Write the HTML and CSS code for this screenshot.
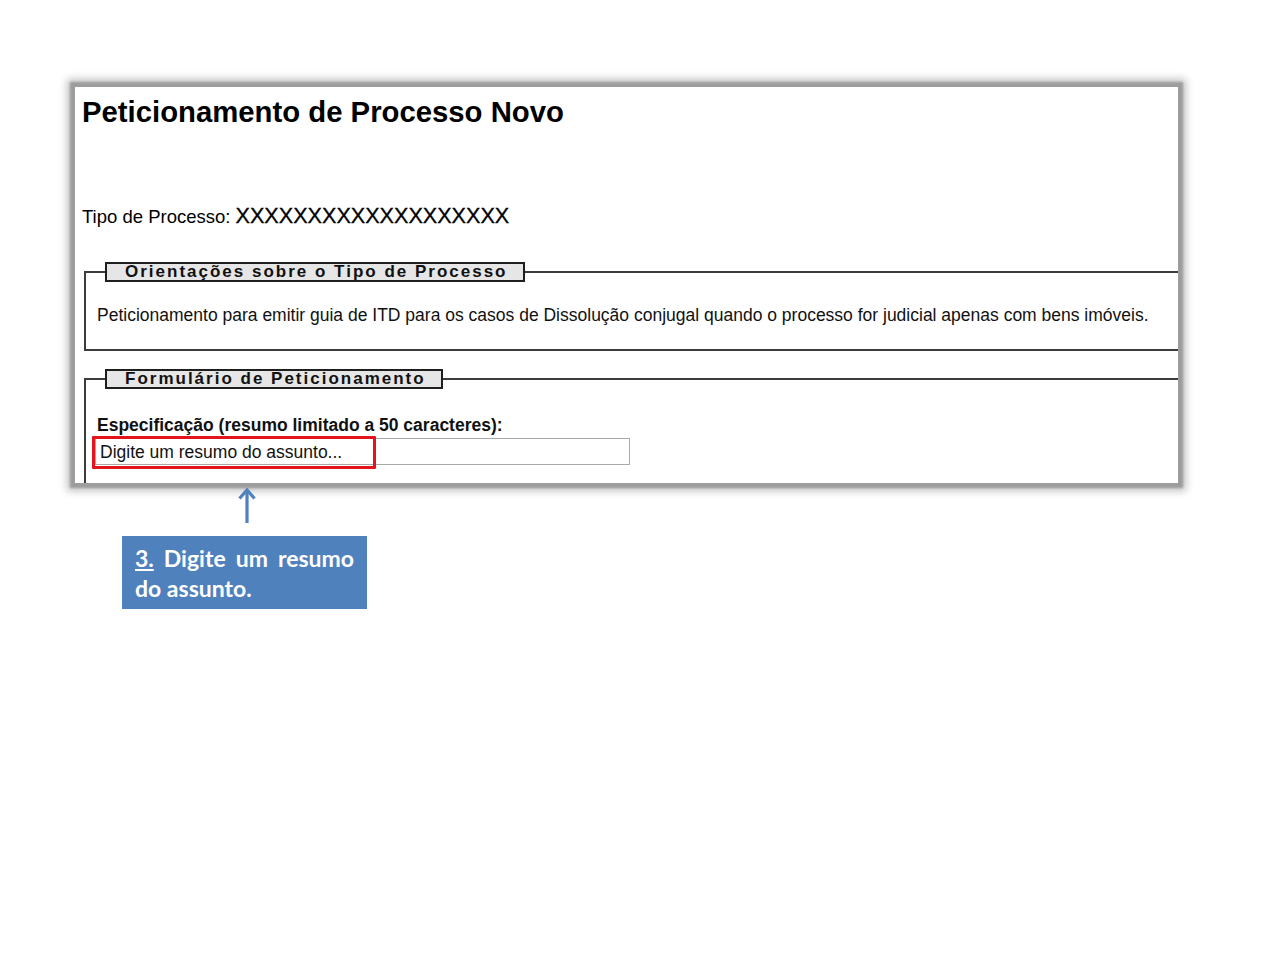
FILE: index.html
```html
<!DOCTYPE html>
<html lang="pt-BR">
<head>
<meta charset="utf-8">
<title>Peticionamento de Processo Novo</title>
<link rel="stylesheet" href="styles.css">
</head>
<body>
<div class="shot">
  <h1 class="title">Peticionamento de Processo Novo</h1>
  <div class="tipo">Tipo de Processo: <span class="tipo-val">XXXXXXXXXXXXXXXXXXX</span></div>
  <fieldset class="box box-first">
    <legend class="legend">Orientações sobre o Tipo de Processo</legend>
    <p class="desc">Peticionamento para emitir guia de ITD para os casos de Dissolução conjugal quando o processo for judicial apenas com bens imóveis.</p>
  </fieldset>
  <fieldset class="box box-second">
    <legend class="legend">Formulário de Peticionamento</legend>
    <label class="label" for="esp">Especificação (resumo limitado a 50 caracteres):</label>
    <div class="field">
      <input id="esp" class="input" type="text" placeholder="Digite um resumo do assunto...">
      <div class="highlight"></div>
    </div>
  </fieldset>
</div>
<div class="callout">
  <svg class="arrow" width="20" height="36" viewBox="0 0 20 36">
    <line x1="10" y1="4" x2="10" y2="36" stroke="#4f81bd" stroke-width="3.2"/>
    <polyline points="2.5,11.5 10,3 17.5,11.5" fill="none" stroke="#4f81bd" stroke-width="3.2" stroke-linejoin="miter"/>
  </svg>
  <div class="note">
    <span class="note-line note-first"><u class="num">3.</u> <span>Digite um resumo</span></span>
    <span class="note-line">do assunto.</span>
  </div>
</div>
</body>
</html>
```
FILE: styles.css
```css
html, body {
  margin: 0;
  padding: 0;
  background: #ffffff;
}

body {
  font-family: "Liberation Sans", Arial, sans-serif;
  color: #111;
}

.shot {
  margin: 87px 0 0 75px;
  width: 1103px;
  height: 396px;
  overflow: hidden;
  background: #fff;
  box-shadow: 0 0 2px 5px #9d9d9d, 0 0 8px 8px #c2c2c2;
  padding-left: 7px;
  box-sizing: border-box;
}

.title {
  margin: 8px 0 0 0;
  font-size: 29.3px;
  line-height: 34px;
  font-weight: bold;
  color: #000;
}

.tipo {
  margin-top: 74px;
  font-size: 18.5px;
  line-height: 26px;
  color: #000;
}

.tipo-val {
  font-size: 21.6px;
  line-height: 26px;
  -webkit-text-stroke: 0.3px #000;
}

.box {
  margin: 0 0 0 2px;
  width: 1140px;
  border: 2px solid #3c3c3c;
  border-right: none;
  padding: 0 0 0 11px;
  box-sizing: border-box;
  min-width: 0;
}

.box-first {
  margin-top: 32px;
  padding-bottom: 24px;
}

.box-second {
  margin-top: 18px;
  height: 200px;
}

.legend {
  margin-left: 8px;
  padding: 0 15px 0 18px;
  border: 2px solid #1e1e1e;
  background: #e6e6e6;
  font-size: 17px;
  line-height: 16px;
  font-weight: bold;
  letter-spacing: 2px;
  color: #111;
}

.desc {
  margin: 23px 0 0 0;
  font-size: 17.5px;
  line-height: 20px;
}

.label {
  display: block;
  margin-top: 26px;
  font-size: 17.5px;
  line-height: 20px;
  font-weight: bold;
}

.field {
  position: relative;
  margin: 3px 0 0 -2px;
  width: 535px;
  height: 27px;
}

.input {
  display: block;
  width: 535px;
  height: 27px;
  box-sizing: border-box;
  margin: 0;
  border: 1px solid #a9a9a9;
  padding: 2px 0 0 4px;
  font-family: "Liberation Sans", Arial, sans-serif;
  font-size: 17.5px;
  color: #111;
  background: #fff;
  outline: none;
}

.input::placeholder {
  color: #111;
  opacity: 1;
}

.highlight {
  position: absolute;
  left: -3px;
  top: -2px;
  width: 284px;
  height: 33px;
  box-sizing: border-box;
  border: 3px solid #e3141b;
  border-radius: 1px;
}

.callout {
  padding-left: 122px;
}

.arrow {
  display: block;
  margin: 4px 0 0 115px;
}

.note {
  margin: 13px 0 0 0;
  width: 245px;
  box-sizing: border-box;
  padding: 7px 13px 6px 13px;
  background: #4f81bd;
  color: #fff;
  font-family: Lato, "Open Sans", sans-serif;
  font-weight: bold;
  font-size: 23px;
  line-height: 30px;
}

.note-line {
  display: block;
}

.note-first {
  text-align: justify;
  text-align-last: justify;
}

.num {
  text-decoration: underline;
}
```
